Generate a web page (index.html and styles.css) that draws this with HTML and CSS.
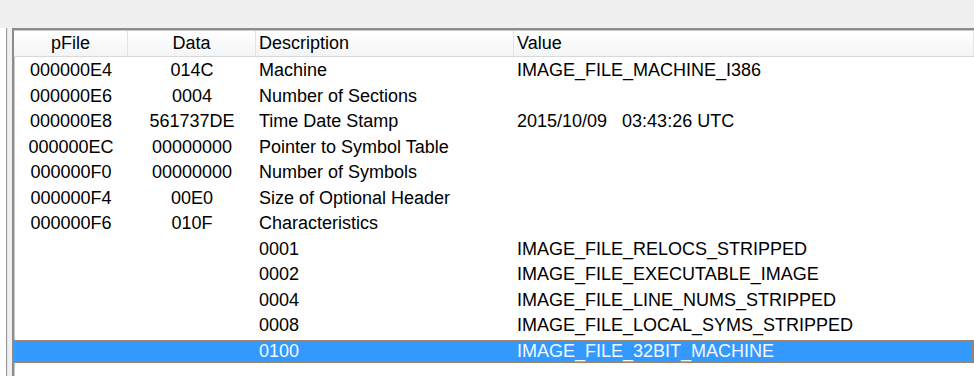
FILE: index.html
```html
<!DOCTYPE html>
<html lang="en">
<head>
    <meta charset="UTF-8">
    <title>File Header</title>
    <link rel="stylesheet" href="styles.css">
</head>
<body>
    <div class="window">
        <!-- toolbar strip -->
        <div class="toolbar"></div>

        <div class="main">
            <!-- tree pane edge -->
            <div class="tree-pane"></div>

            <!-- list view -->
            <div class="list-view">
                <div class="list-header row">
                    <div class="col center">pFile</div>
                    <div class="col center">Data</div>
                    <div class="col">Description</div>
                    <div class="col">Value</div>
                </div>

                <div class="row">
                    <div class="col center">000000E4</div>
                    <div class="col center">014C</div>
                    <div class="col">Machine</div>
                    <div class="col">IMAGE_FILE_MACHINE_I386</div>
                </div>
                <div class="row">
                    <div class="col center">000000E6</div>
                    <div class="col center">0004</div>
                    <div class="col">Number of Sections</div>
                    <div class="col"></div>
                </div>
                <div class="row">
                    <div class="col center">000000E8</div>
                    <div class="col center">561737DE</div>
                    <div class="col">Time Date Stamp</div>
                    <div class="col">2015/10/09&nbsp;&nbsp;&nbsp;03:43:26 UTC</div>
                </div>
                <div class="row">
                    <div class="col center">000000EC</div>
                    <div class="col center">00000000</div>
                    <div class="col">Pointer to Symbol Table</div>
                    <div class="col"></div>
                </div>
                <div class="row">
                    <div class="col center">000000F0</div>
                    <div class="col center">00000000</div>
                    <div class="col">Number of Symbols</div>
                    <div class="col"></div>
                </div>
                <div class="row">
                    <div class="col center">000000F4</div>
                    <div class="col center">00E0</div>
                    <div class="col">Size of Optional Header</div>
                    <div class="col"></div>
                </div>
                <div class="row">
                    <div class="col center">000000F6</div>
                    <div class="col center">010F</div>
                    <div class="col">Characteristics</div>
                    <div class="col"></div>
                </div>
                <div class="row">
                    <div class="col"></div>
                    <div class="col"></div>
                    <div class="col">0001</div>
                    <div class="col">IMAGE_FILE_RELOCS_STRIPPED</div>
                </div>
                <div class="row">
                    <div class="col"></div>
                    <div class="col"></div>
                    <div class="col">0002</div>
                    <div class="col">IMAGE_FILE_EXECUTABLE_IMAGE</div>
                </div>
                <div class="row">
                    <div class="col"></div>
                    <div class="col"></div>
                    <div class="col">0004</div>
                    <div class="col">IMAGE_FILE_LINE_NUMS_STRIPPED</div>
                </div>
                <div class="row">
                    <div class="col"></div>
                    <div class="col"></div>
                    <div class="col">0008</div>
                    <div class="col">IMAGE_FILE_LOCAL_SYMS_STRIPPED</div>
                </div>
                <div class="row selected">
                    <div class="col"></div>
                    <div class="col"></div>
                    <div class="col">0100</div>
                    <div class="col">IMAGE_FILE_32BIT_MACHINE</div>
                </div>
            </div>
        </div>
    </div>
</body>
</html>
```

FILE: styles.css
```css
* {
    margin: 0;
    padding: 0;
    box-sizing: border-box;
}

body {
    font-family: 'Liberation Sans', Arial, sans-serif;
    font-size: 18px;
    color: #000;
    background: #f0f0f0;
    height: 376px;
    overflow: hidden;
}

.window {
    display: flex;
    flex-direction: column;
    height: 376px;
}

/* toolbar strip */
.toolbar {
    height: 28px;
    background: #f0f0f0;
}

.main {
    display: flex;
    flex: 1;
    gap: 5px;
    overflow: hidden;
}

/* tree pane edge */
.tree-pane {
    width: 7px;
    background: #fff;
    border-right: 1px solid #9a9a9a;
    box-shadow: 1px 0 0 #e3e3e3;
}

/* list view */
.list-view {
    flex: 1;
    background: #fff;
    border-top: 2px solid #8c8c8c;
    border-left: 2px solid #8c8c8c;
    box-shadow: inset 1px 1px 0 #c8c8c8;
    overflow: hidden;
}

.row {
    display: grid;
    grid-template-columns: 114px 128px 258px 1fr;
    height: 25.5px;
    align-items: center;
    white-space: nowrap;
}

.list-header {
    height: 26px;
    margin-top: 1px;
    margin-bottom: 1px;
    background: linear-gradient(#ffffff, #f3f4f6);
    border-bottom: 1px solid #d8d8d8;
}

.list-header .col {
    height: 100%;
    display: flex;
    align-items: center;
    border-right: 1px solid #e3e4e6;
}

.list-header .col.center {
    justify-content: center;
}

.col {
    padding-left: 3px;
    overflow: hidden;
}

.col.center {
    text-align: center;
    padding-left: 0;
}

.row.selected {
    background: #3399ff;
    background-clip: content-box;
    padding: 1px 0;
    color: #f4f8ff;
}

/* dotted focus rectangle */
.row.selected {
    outline: 1px dotted #a88a6e;
    outline-offset: -2px;
}
```
